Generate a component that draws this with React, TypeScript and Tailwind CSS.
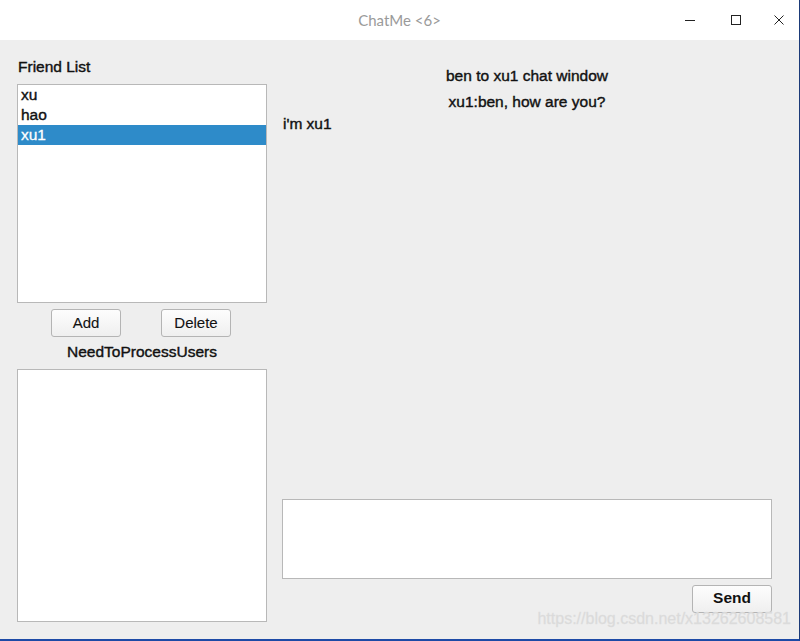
import React from 'react';

const friends = ['xu', 'hao', 'xu1'];

function MacButton({ label, className }: { label: string; className?: string }) {
  return (
    <button
      className={`h-[28px] pb-[2px] rounded-[3px] border border-[#b4b4b4] bg-gradient-to-b from-[#fdfdfd] to-[#efefef] text-[15px] text-[#111] leading-none ${className ?? ''}`}
    >
      {label}
    </button>
  );
}

export default function App() {
  const selected = 'xu1';

  return (
    <div className="relative w-[800px] h-[641px] flex flex-col bg-[#eeeeee] border-r border-b-2 border-r-[#1b3a78] border-b-[#1d4aa6] font-['Liberation_Sans',Arial,sans-serif] text-[#111] overflow-hidden">
      {/* title bar */}
      <div className="h-[40px] bg-white flex items-center relative shrink-0">
        <div className="flex-1 text-center text-[15px] text-[#9a9a9a] font-['Lato',sans-serif]">ChatMe &lt;6&gt;</div>
        <div className="absolute right-0 top-0 h-[40px] flex items-center">
          <div className="w-[46px] flex justify-center">
            <svg width="10" height="10" viewBox="0 0 10 10"><path d="M0 5.5h10" stroke="#222" strokeWidth="1" /></svg>
          </div>
          <div className="w-[46px] flex justify-center">
            <svg width="10" height="10" viewBox="0 0 10 10"><rect x="0.5" y="0.5" width="9" height="9" fill="none" stroke="#222" strokeWidth="1" /></svg>
          </div>
          <div className="w-[40px] flex justify-center">
            <svg width="10" height="10" viewBox="0 0 10 10"><path d="M0.5 0.5l9 9M9.5 0.5l-9 9" stroke="#222" strokeWidth="1" /></svg>
          </div>
        </div>
      </div>

      {/* body */}
      <div className="flex-1 flex gap-[15px] pl-[17px] pr-[27px] pt-[17px] pb-[17px] [-webkit-text-stroke:0.4px_#111]">
        {/* left column */}
        <div className="w-[250px] flex flex-col">
          <div className="h-[20px] leading-[20px] text-[15.5px] pl-[1px]">Friend List</div>
          <div className="mt-[7px] h-[219px] bg-white border border-[#b8b8b8] flex flex-col">
            {friends.map((f) => (
              <div
                key={f}
                className={`h-[20px] leading-[20px] text-[15.5px] pl-[3px] ${f === selected ? 'bg-[#2e8bc9] text-white [-webkit-text-stroke:0.3px_#fff]' : ''}`}
              >
                {f}
              </div>
            ))}
          </div>
          <div className="mt-[6px] flex justify-center gap-[40px] pr-[2px] [-webkit-text-stroke:0.1px_#111]">
            <MacButton label="Add" className="w-[70px]" />
            <MacButton label="Delete" className="w-[70px]" />
          </div>
          <div className="mt-[5px] h-[20px] leading-[20px] text-[15.5px] text-center">NeedToProcessUsers</div>
          <div className="mt-[7px] h-[253px] bg-white border border-[#b8b8b8]" />
        </div>

        {/* right column */}
        <div className="flex-1 flex flex-col">
          <div className="mt-[9px] h-[20px] leading-[20px] text-[15.5px] text-center">ben to xu1 chat window</div>
          <div className="mt-[6px] h-[20px] leading-[20px] text-[15.5px] text-center">xu1:ben, how are you?</div>
          <div className="mt-[2px] h-[20px] leading-[20px] text-[15.5px] pl-[1px]">i'm xu1</div>
          <div className="flex-1" />
          <div className="h-[80px] bg-white border border-[#b8b8b8]" />
          <div className="mt-[6px] flex justify-end">
            <button className="w-[80px] h-[28px] pb-[2px] rounded-[3px] border border-[#b4b4b4] bg-gradient-to-b from-[#fdfdfd] to-[#efefef] text-[15.5px] font-bold text-[#111] leading-none [-webkit-text-stroke:0px]">
              Send
            </button>
          </div>
          <div className="h-[9px]" />
        </div>
      </div>

      {/* watermark */}
      <div className="absolute right-[8px] bottom-[8px] text-[16px] text-[#dadada] font-['Liberation_Sans',Arial,sans-serif] [-webkit-text-stroke:0.3px_#dedede]">
        https://blog.csdn.net/x13262608581
      </div>
    </div>
  );
}
